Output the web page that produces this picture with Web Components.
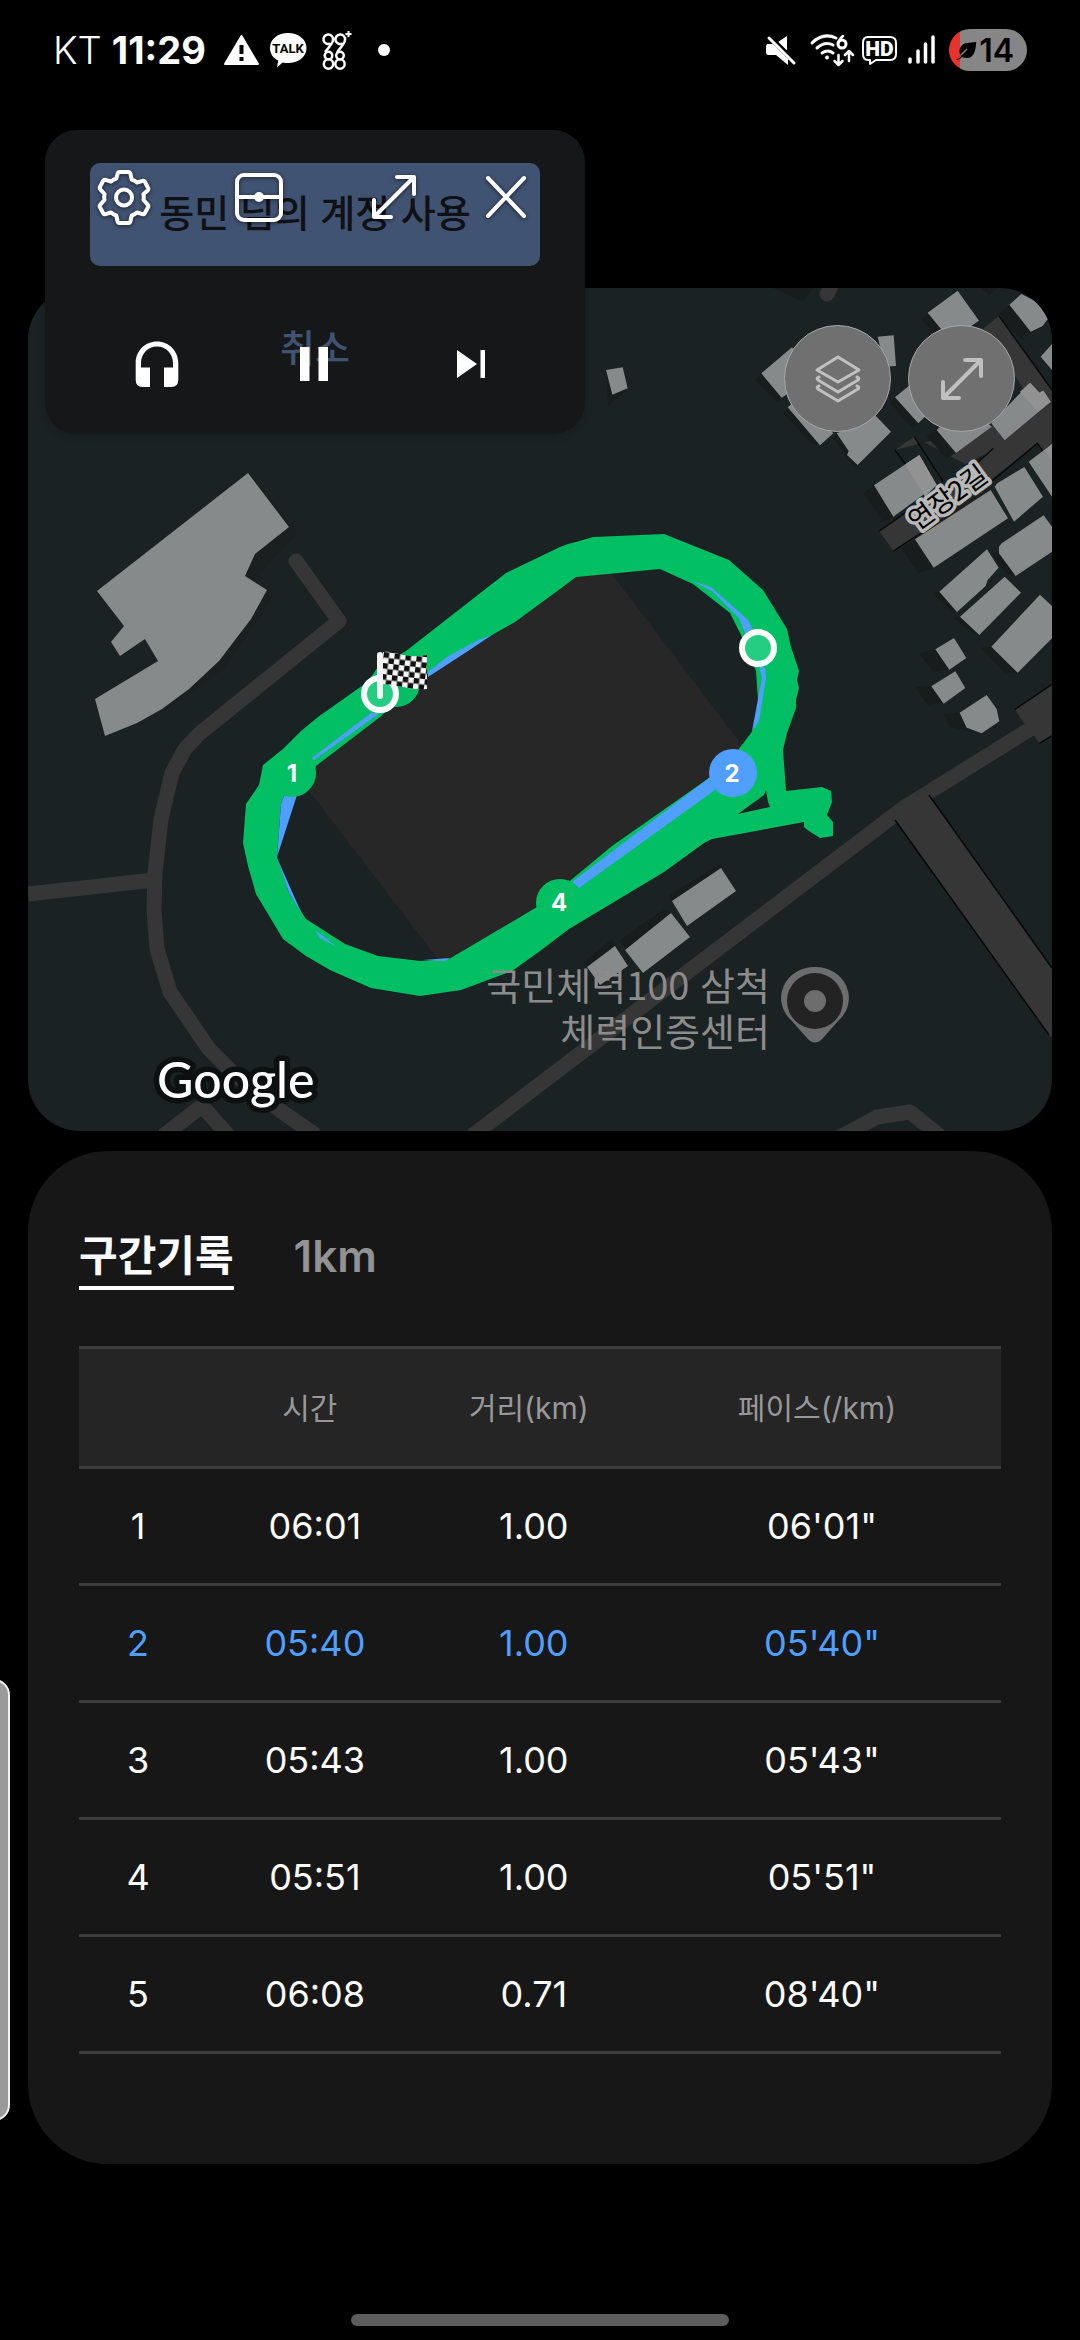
<!DOCTYPE html>
<html lang="ko">
<head>
<meta charset="utf-8">
<meta name="viewport" content="width=device-width, initial-scale=1">
<title>구간기록</title>
<style>
    body {
        margin: 0;
        background: #000;
        color: #fff;
        font-family: Inter, "Noto Sans CJK KR", sans-serif;
    }
</style>
</head>
<body>
<run-screen>
    <status-bar slot="status" carrier="KT" time="11:29" battery="14"></status-bar>
    <course-map slot="map"></course-map>
    <lap-card slot="laps" label="구간기록" unit="1km"></lap-card>
    <floating-player slot="player">
        <span slot="primary">동민 님의 계정 사용</span>
        <span slot="cancel">취소</span>
    </floating-player>
</run-screen>

<script>
class RunScreen extends HTMLElement {
    constructor() {
        super();
        this.attachShadow({ mode: 'open' });
    }

    connectedCallback() {
        this.shadowRoot.innerHTML = `
            <style>
                :host {
                    display: flex;
                    flex-direction: column;
                    position: relative;
                    min-height: 100vh;
                    overflow: hidden;
                }
                main {
                    flex: 1;
                    display: flex;
                    flex-direction: column;
                    gap: 20px;
                    padding: 188px 28px 40px;
                }
                .edge {
                    position: absolute;
                    left: -22px;
                    top: 1679px;
                    width: 28px;
                    height: 438px;
                    border: 2px solid #f2f2f2;
                    border-radius: 20px;
                    background: #9a9a9a;
                }
                .home {
                    width: 35%;
                    height: 12px;
                    margin: 0 auto 14px;
                    border-radius: 6px;
                    background: #5d5d5d;
                }
            </style>
            <slot name="status"></slot>
            <main>
                <slot name="map"></slot>
                <slot name="laps"></slot>
            </main>
            <div class="home"></div>
            <div class="edge"></div>
            <slot name="player"></slot>
        `;
    }
}

class StatusBar extends HTMLElement {
    constructor() {
        super();
        this.attachShadow({ mode: 'open' });
    }

    connectedCallback() {
        this.render();
    }

    render() {
        const { carrier, time, battery } = this.attributes;
        this.shadowRoot.innerHTML = `
            <style>
                :host {
                    display: flex;
                    align-items: center;
                    justify-content: space-between;
                    height: 100px;
                    padding: 0 53px;
                }
                .side {
                    display: flex;
                    align-items: center;
                }
                svg {
                    display: block;
                    flex: none;
                }
                .carrier {
                    font-size: 38px;
                    font-weight: 300;
                    line-height: 44px;
                }
                .time {
                    margin: 0 16px 0 10px;
                    font-size: 38px;
                    font-weight: 700;
                    line-height: 44px;
                }
                .right { gap: 13px; }
                .battery {
                    display: flex;
                    align-items: center;
                    justify-content: space-between;
                    box-sizing: border-box;
                    width: 78px;
                    height: 42px;
                    padding: 0 13px 0 6px;
                    border-radius: 21px;
                    background: linear-gradient(90deg, #e8322b 11px, #868686 11px);
                    color: #000;
                    font-size: 32px;
                    font-weight: 600;
                }
            </style>
            <div class="side">
                <span class="carrier">${carrier.value}</span>
                <span class="time">${time.value}</span>
                <svg width="172" height="46" viewBox="223 27 172 46">
                    <path fill="#fff" stroke="#fff" stroke-width="2" stroke-linejoin="round" d="M242.500 36 259 64H226z"/>
                    <path fill="#000" d="M240.500 45h4v9h-4zM240.500 57h4v4h-4z"/>
                    <path fill="#fff" d="M289 33c10 0 18.500 6 18.500 15S299 63 289 63c-2 0-4 0-5.500-.6L278 67.500l1.200-7C274 58 271 53.500 271 48c0-9 8-15 18-15z"/>
                    <text x="289" y="53" text-anchor="middle" font-family="Roboto, sans-serif" font-weight="700" font-size="13" fill="#000">TALK</text>
                    <g fill="none" stroke="#fff" stroke-width="2.500">
                        <path d="M331.500 43.500A4.800 4.800 0 1 1 334 40Q334 43 326 52M343.500 43.500A4.800 4.800 0 1 1 346 40Q346 43 338 52"/>
                        <circle cx="329.500" cy="55.500" r="3.800"/>
                        <circle cx="341" cy="55.500" r="3.800"/>
                        <circle cx="329.500" cy="64" r="4.700"/>
                        <circle cx="341" cy="64" r="4.700"/>
                        <path stroke-width="2" d="M349.500 31v6M346.500 34h6"/>
                    </g>
                    <circle cx="385" cy="50" r="6" fill="#fff"/>
                </svg>
            </div>
            <div class="side right">
                <svg width="172" height="46" viewBox="764 27 172 46">
                    <path fill="#fff" d="M787 36v15l-9-9zM768 44h5l15 15v6L776 55h-8q-2 0-2-3v-5q0-3 2-3z"/>
                    <path stroke="#000" stroke-width="2" d="m771 36 25 25"/>
                    <path stroke="#fff" stroke-width="3" stroke-linecap="round" d="m769 38 25 25"/>
                    <g fill="none" stroke="#fff" stroke-width="3" stroke-linecap="round" stroke-linejoin="round">
                        <path d="M812 43q11-11 24-5M817 48q8-7 16-3M822 53q6-4 11 0"/>
                        <circle cx="842" cy="44" r="4"/>
                        <path stroke-width="2.500" d="M843 36q-4 3-5 8M838.500 55v9m-4-3 4 4 4-4M849 61v-9m-4 3 4-4 4 4"/>
                        <path stroke-width="2" d="M868 37h22q6 0 6 6v11q0 6-6 6h-14l-6 4v-4h-2q-5 0-5-6V43q0-6 5-6z"/>
                    </g>
                    <circle cx="827" cy="57.500" r="2" fill="#fff"/>
                    <text x="879.500" y="56" text-anchor="middle" font-family="Roboto, sans-serif" font-weight="900" font-size="21" fill="#fff">HD</text>
                    <path stroke="#fff" stroke-width="3.500" stroke-linecap="round" d="M910 59v3M918 51v11M925.500 44v18M933 37v25"/>
                </svg>
                <span class="battery">
                    <svg width="22" height="22" viewBox="0 0 22 22">
                        <path d="M1 20c3 0 4-1 5-3-4-6 0-12 6-13l8-1q2 0 1 2-1 14-9 14-3 0-5-1-2 3-5 3z"/>
                        <path fill="none" stroke="#868686" stroke-width="1.500" d="m6 16 6-6"/>
                    </svg>
                    ${battery.value}
                </span>
            </div>
        `;
    }
}

class FloatingPlayer extends HTMLElement {
    constructor() {
        super();
        this.attachShadow({ mode: 'open' });
    }

    connectedCallback() {
        this.shadowRoot.innerHTML = `
            <style>
                :host {
                    display: block;
                    position: absolute;
                    left: 45px;
                    top: 130px;
                    box-sizing: border-box;
                    width: 50%;
                    height: 304px;
                    padding: 33px 45px;
                    border-radius: 32px;
                    background: #161719;
                    box-shadow: 0 2px 8px rgba(0, 0, 0, 0.15);
                    font-family: "Noto Sans CJK KR", sans-serif;
                }
                button {
                    display: flex;
                    align-items: center;
                    justify-content: center;
                    padding: 0;
                    border: 0;
                    background: none;
                    color: inherit;
                    font: inherit;
                }
                svg { display: block; }
                .account, .cancel {
                    width: 100%;
                    font-size: 38px;
                    font-weight: 500;
                    line-height: 56px;
                }
                .account {
                    height: 103px;
                    padding-bottom: 8px;
                    border-radius: 10px;
                    background: #415372;
                    color: #101114;
                }
                .cancel {
                    margin-top: 52px;
                    color: #415372;
                }
                .window, .media {
                    position: absolute;
                    display: grid;
                }
                .window {
                    inset: 32px 34px auto 11px;
                    grid-template-columns: 3fr 3fr 3fr 2fr;
                    filter: drop-shadow(0 1px 2px rgba(0, 0, 0, 0.6));
                }
                .window button { height: 70px; }
                .media {
                    inset: auto 35px 32px 33px;
                    grid-template-columns: repeat(3, 1fr);
                }
                .media button { height: 76px; }
            </style>
            <button class="account"><slot name="primary"></slot></button>
            <button class="cancel"><slot name="cancel"></slot></button>
            <div class="window">
                <button aria-label="settings">
                    <svg width="56" height="56" viewBox="-28 -28 56 56" fill="none" stroke="#fff" stroke-width="4" stroke-linejoin="round">
                        <path d="M-4.500-25h9q1.500 0 2 2l1.200 5.500q3 1 5.300 3l5.500-1.700q1.500-.5 2.300 1l3.200 6q.8 1.500-.3 2.600L19.500-3q.5 3 0 6l4.200 4.600q1.100 1.100.3 2.600l-3.200 6q-.8 1.500-2.300 1L13 15.500q-2.300 2-5.300 3L6.500 24q-.5 2-2 2h-9q-1.500 0-2-2l-1.200-5.500q-3-1-5.300-3l-5.500 1.700q-1.500.5-2.300-1l-3.200-6q-.8-1.500.3-2.600L-19.500 3q-.5-3 0-6l-4.200-4.600q-1.100-1.100-.3-2.600l3.200-6q.8-1.500 2.300-1l5.500 1.700q2.300-2 5.300-3L-6.500-23q.5-2 2-2z"/>
                        <circle cy="0.500" r="8"/>
                    </svg>
                </button>
                <button aria-label="split">
                    <svg width="50" height="50" viewBox="0 0 50 50" fill="none" stroke="#fff" stroke-width="4">
                        <rect x="3" y="3" width="44" height="45" rx="7"/>
                        <path d="M3 25h44"/>
                        <circle cx="25" cy="25" r="5" fill="#fff" stroke="none"/>
                    </svg>
                </button>
                <button aria-label="expand">
                    <svg width="48" height="48" viewBox="0 0 48 48" fill="none" stroke="#fff" stroke-width="4" stroke-linecap="round" stroke-linejoin="round">
                        <path d="m5 43 38-38M27 4h17v17M4 27v17h17"/>
                    </svg>
                </button>
                <button aria-label="close">
                    <svg width="44" height="44" viewBox="0 0 44 44" fill="none" stroke="#fff" stroke-width="4" stroke-linecap="round">
                        <path d="m4 3 36 38M40 3 4 41"/>
                    </svg>
                </button>
            </div>
            <div class="media">
                <button aria-label="audio">
                    <svg width="44" height="46" viewBox="0 0 44 46" fill="#fff">
                        <path d="M22 0.500C10 .5 .7 10 .7 22v17q0 7 7 7H15V26.500H6V22C6 12.800 13 5.500 22 5.500S38 12.800 38 22v4.500h-9V46h7.300q7 0 7-7V22C43.300 10 34 .5 22 .5z"/>
                    </svg>
                </button>
                <button aria-label="pause">
                    <svg width="28" height="34" viewBox="0 0 28 34" fill="#fff">
                        <path d="M0 0h9.500v34H0zM18.500 0H28v34h-9.500z"/>
                    </svg>
                </button>
                <button aria-label="next">
                    <svg width="28" height="28" viewBox="0 0 28 28" fill="#fff">
                        <path d="M0 0 20 14 0 28zM23.500 0H28v28h-4.500z"/>
                    </svg>
                </button>
            </div>
        `;
    }
}

class CourseMap extends HTMLElement {
    constructor() {
        super();
        this.attachShadow({ mode: 'open' });
    }

    connectedCallback() {
        this.shadowRoot.innerHTML = `
            <style>
                :host {
                    display: block;
                    position: relative;
                    overflow: hidden;
                    border-radius: 52px;
                    background: #1b2223;
                    font-family: "Noto Sans CJK KR", sans-serif;
                }
                .map {
                    display: block;
                    width: 100%;
                    height: auto;
                }
                .tools {
                    position: absolute;
                    top: 37px;
                    right: 37px;
                    display: flex;
                    gap: 17px;
                }
                .tools button {
                    display: flex;
                    align-items: center;
                    justify-content: center;
                    width: 107px;
                    height: 107px;
                    padding: 0;
                    border: 1px solid #a8a8a8;
                    border-radius: 50%;
                    background: #707070;
                }
            </style>
            <svg class="map" viewBox="28 288 1024 843">
                <!-- paths and roads -->
                <g fill="none" stroke="#363636" stroke-width="15" stroke-linejoin="round">
                    <path stroke-linecap="round" d="M296 561 339 621 199 734 185 749 172 773 161 819 155 873 154 909 157 949 170 992 209 1049 234 1074 285 1114 313 1133"/>
                    <path d="M28 894 154 880M163 1136 202 1106 229 1136M472 1136 540 1084 905 807 1035 726M820 1148 877 1117 910 1112 940 1136"/>
                    <path stroke-linecap="round" d="M827 294 834 280"/>
                </g>
                <path fill="#363636" d="M929 795 1052 968V1037L1049 1035 895 820z"/>
                <path fill="none" stroke="#070808" stroke-width="1.500" d="M929 795 1052 968M895 820 1049 1035"/>

                <!-- old town, upper right -->
                <g transform="translate(600 270) scale(.33333)">
                    <path fill="#181c1c" d="M520 54 610 95 640 54zM1145 54 1168 78 1190 54z"/>
                    <path fill="#363636" d="M885 540 942 500 1020 620 1180 540 1312 520 1356 420V360L1197 138 1150 175 1300 400 1120 590 1000 670 838 784 880 843 1000 765 1312 520 1356 580V420z"/>
                    <path fill="#1b2223" d="M1030 630 942 500 1110 590zM1190 640 1312 520 1356 590V700z"/>
                    <path fill="#363636" d="M1245 1318 1356 1243V1397L1318 1420 1295 1388 1267 1352z"/>
                    <path fill="none" stroke="#070808" stroke-width="4" d="M1197 138 1356 360M885 540 1030 735M942 500 1030 635M838 784 970 690M880 843 1000 765M1170 638 1312 520 1330 545M1120 590 1180 535M1245 1318 1356 1243M1318 1420 1356 1397"/>
                    <g fill="#181c1c">
                        <path d="M18 300 25 410 83 355zM484 310 465 330 535 397 560 370zM563 412 548 430 640 525 680 510zM710 490 700 505 765 595 790 570zM983 130 964 150 1030 220 1060 160zM1228 105 1195 135 1262 208 1300 180zM885 382 870 400 938 475 970 450zM1012 475 980 500 1040 566 1080 540zM822 645 790 670 850 755 890 735zM945 810 905 835 955 910 1010 890zM1197 845 1175 850 1222 915 1250 910zM1020 965 1000 970 1055 1027 1080 1020zM1084 1040 1062 1045 1120 1095 1145 1090zM1175 1130 1143 1133 1215 1208 1253 1208zM1007 1138 958 1150 1000 1206 1060 1195zM994 1248 946 1252 983 1305 1050 1295zM1080 1328 1030 1332 1050 1372 1140 1388z"/>
                    </g>
                    <g fill="#868a8b">
                        <path d="M18 300 68 292 83 355 37 374zM484 310 576 232 640 320 545 383zM563 412 600 380 700 490 660 526zM710 490 828 438 873 485 773 585 741 555 746 543zM833 200 881 196 888 288 855 290zM983 128 1073 62 1137 152 1050 210zM1228 104 1264 72 1310 95 1345 145 1328 168 1292 185zM1322 260 1356 222V300zM885 382 930 345 980 435 955 460zM1010 480 1100 400 1175 470 1068 549zM1174 460 1290 338 1318 368 1330 362 1352 395 1214 511zM822 646 958 555 1010 645 880 740zM945 808 1172 660 1224 745 1001 893zM1184 650 1192 640 1273 591 1329 680 1242 755zM1286 575 1356 522V680zM1197 830 1205 820 1331 736 1356 770V845L1247 918 1197 850zM1018 965 1161 838 1196 893 1163 930 1157 948 1071 1026zM1080 1040 1214 920 1263 968 1138 1095zM1174 1130 1320 974 1356 1008V1105L1253 1208zM1006 1138 1062 1104 1099 1164 1048 1199zM994 1249 1066 1204 1096 1254 1031 1301zM1079 1328 1160 1275 1190 1317 1198 1354 1145 1390 1100 1373z"/>
                    </g>
                    <path fill="#929292" d="M916 583 958 555 1010 645 975 680zM1260 365 1290 338 1318 368 1330 362 1352 395 1314 425zM1336 540 1356 522V570z"/>
                </g>

                <!-- other buildings -->
                <path fill="#1b1f20" d="M250 473 297 533 252 582 275 594 225 668 165 709 160 650z"/>
                <path fill="#868a8b" d="M248 473 289 527 255 554 245 576 267 590 251 619 219 661 189 689 162 709 137 723 105 736 95 699 158 661 145 639 120 656 111 642 124 626 97 591z"/>
                <path fill="#181c1c" d="M672 901 668 896 720 864 722 868zM626 950 619 941 664 909 671 913zM587 967 584 962 612 939 628 965z"/>
                <path fill="#868a8b" d="M672 901 721 868 736 891 687 926zM625 950 671 913 690 937 643 973zM587 967 615 946 628 966 600 985z"/>

                <path fill="#272727" d="M297 775 596 553 757 765 450 975z"/>

                <!-- run track -->
                <path fill="#02bf64" fill-rule="evenodd" d="M568 544 576 542 593 537 664 534 729 560 763 590 787 629 791 647 799 671 797 680 799 688 796 700 796 708 787 733 783 750 786 791 822 787 831 791 832 802 827 815 833 822V836L820 838 809 831 804 827V822L712 839 704 843 664 872 569 929 540 951 512 971 461 990 420 996 371 988 330 970 306 956 283 939 256 894 248 866 243 843 246 804 259 785 263 765 283 749 301 731 318 717 366 683 378 668 406 651 506 573 560 547z
                    M576 577 660 569 693 584 730 613 743 639 756 671 758 700 757 722 751 733 738 750 709 778 612 846 571 880 537 907 449 959 420 961 378 956 345 944 306 919 289 893 277 857 281 804 284 796 310 785 316 766 380 717 427 674 492 635 515 622 560 589z
                    M738 814 764 795 766 790 768 802 770 807z"/>
                <path fill="#509fff" d="M428 672 447 657 478 640 492 635 468 651 428 677zM312 758 314 760 380 713 371 713zM284 796 298 792 277 857 281 804zM277 858 302 914 289 893zM315 930 337 947 320 938zM423 960 450 958 445 961zM692 581 711 587 748 620 753 630 745 633 739 618 712 591zM759 665 765 668 766 678 759 721 752 731 762 678zM572 882 709 778 715 790 579 888z"/>
                <g fill="#02bf64">
                    <circle cx="396" cy="683" r="24"/>
                    <circle cx="292" cy="773" r="24"/>
                    <circle cx="560" cy="903" r="24"/>
                </g>
                <circle cx="733" cy="773" r="24" fill="#509fff"/>
                <g fill="#fff" font-family="Inter, sans-serif" font-size="24" font-weight="700" text-anchor="middle">
                    <text x="292" y="782">1</text>
                    <text x="732" y="782">2</text>
                    <text x="559" y="911">4</text>
                </g>
                <g fill="#24cd81" stroke="#fff" stroke-width="6">
                    <circle cx="758" cy="648" r="16"/>
                    <circle cx="380" cy="694" r="16"/>
                </g>

                <!-- finish flag -->
                <defs>
                    <pattern id="check" width="11" height="11" patternUnits="userSpaceOnUse" patternTransform="translate(384 652) rotate(7)">
                        <path fill="#f4f4f4" d="M0 0h11v11H0z"/>
                        <path fill="#111" d="M0 0h5.500v5.500H0zM5.500 5.500H11V11H5.500z"/>
                    </pattern>
                </defs>
                <path fill="url(#check)" d="M383 652q7-1 16 2 14 4 28 1v34q-14 1-24-2-12-3-20-3z"/>
                <path stroke="#f4f4f4" stroke-width="6" stroke-linecap="round" d="M380 655v41"/>

                <!-- place labels -->
                <g fill="#8c8c8c" font-size="38" text-anchor="end">
                    <text x="770" y="1000">국민체력100 삼척</text>
                    <text x="770" y="1046">체력인증센터</text>
                </g>
                <path fill="#6d6d6d" d="M815 967a33.500 31 0 0 1 24 53l-16 18q-8 9-16 0l-16-18a33.500 31 0 0 1 24-53z"/>
                <circle cx="815" cy="1001" r="28" fill="#232323"/>
                <circle cx="815" cy="1001" r="11" fill="#6d6d6d"/>
                <text x="948" y="507" transform="rotate(-36 948 498)" text-anchor="middle" font-size="27" fill="#000" stroke="#b8b8b8" stroke-width="7" stroke-linejoin="round" paint-order="stroke">연장2길</text>
                <text x="157" y="1098" font-family="Lato, sans-serif" font-size="50" font-weight="500" fill="#fff" stroke="#0d1011" stroke-width="11" stroke-linejoin="round" paint-order="stroke">Google</text>
            </svg>
            <div class="tools">
                <button aria-label="layers">
                    <svg width="46" height="48" viewBox="0 0 46 48" fill="none" stroke="#c0c0c0" stroke-width="3" stroke-linecap="round" stroke-linejoin="round">
                        <path d="M23 2 44 15 23 27 2 15zM4 22q-3 1-1 3l20 12 20-12q2-2-1-3M4 31q-3 1-1 3l20 12 20-12q2-2-1-3"/>
                    </svg>
                </button>
                <button aria-label="full screen">
                    <svg width="42" height="42" viewBox="0 0 42 42" fill="none" stroke="#c0c0c0" stroke-width="4" stroke-linecap="round" stroke-linejoin="round">
                        <path d="m3 39 36-36M24 2h16v16M2 24v16h16"/>
                    </svg>
                </button>
            </div>
        `;
    }
}

const laps = [
    { time: '06:01', distance: '1.00', pace: '06\'01"' },
    { time: '05:40', distance: '1.00', pace: '05\'40"', best: true },
    { time: '05:43', distance: '1.00', pace: '05\'43"' },
    { time: '05:51', distance: '1.00', pace: '05\'51"' },
    { time: '06:08', distance: '0.71', pace: '08\'40"' }
];

class LapCard extends HTMLElement {
    constructor() {
        super();
        this.attachShadow({ mode: 'open' });
    }

    connectedCallback() {
        this.render();
    }

    render() {
        const { label, unit } = this.attributes;
        this.shadowRoot.innerHTML = `
            <style>
                :host {
                    display: block;
                    padding: 73px 51px 110px;
                    border-radius: 80px;
                    background: #171717;
                }
                nav {
                    display: flex;
                    gap: 60px;
                    margin-bottom: 56px;
                }
                nav button {
                    padding: 2px 0 0;
                    border: 0;
                    border-bottom: 4px solid transparent;
                    background: none;
                    color: #929294;
                    font: 600 44px/60px Inter, "Noto Sans CJK KR", sans-serif;
                }
                nav .active {
                    border-color: #fff;
                    color: #fcfbff;
                    font-size: 42px;
                    font-weight: 700;
                }
                table {
                    width: 100%;
                    border-collapse: collapse;
                    table-layout: fixed;
                    text-align: center;
                }
                .no { width: 12.8%; }
                .time { width: 24.7%; }
                .distance { width: 22.8%; }
                th, td {
                    box-sizing: border-box;
                    height: 117px;
                    padding: 0;
                    border-bottom: 3px solid #3c3c3c;
                    font-weight: 400;
                }
                th {
                    height: 120px;
                    padding: 0 2px 4px 0;
                    border-top: 3px solid #3c3c3c;
                    background: #252525;
                    color: #98989a;
                    font-size: 30px;
                }
                td {
                    color: #fcfcfc;
                    font-size: 36px;
                }
                td + td { padding-left: 8px; }
                .best td { color: #509fff; }
            </style>
            <nav>
                <button class="active">${label.value}</button>
                <button>${unit.value}</button>
            </nav>
            <table>
                <thead>
                    <tr>
                        <th class="no"></th>
                        <th class="time">시간</th>
                        <th class="distance">거리(km)</th>
                        <th>페이스(/km)</th>
                    </tr>
                </thead>
                <tbody>
                    ${laps.map((lap, i) => `
                        <tr class="${lap.best ? 'best' : ''}">
                            <td>${i + 1}</td>
                            <td>${lap.time}</td>
                            <td>${lap.distance}</td>
                            <td>${lap.pace}</td>
                        </tr>
                    `).join('')}
                </tbody>
            </table>
        `;
    }
}

customElements.define('run-screen', RunScreen);
customElements.define('status-bar', StatusBar);
customElements.define('floating-player', FloatingPlayer);
customElements.define('course-map', CourseMap);
customElements.define('lap-card', LapCard);
</script>
</body>
</html>
